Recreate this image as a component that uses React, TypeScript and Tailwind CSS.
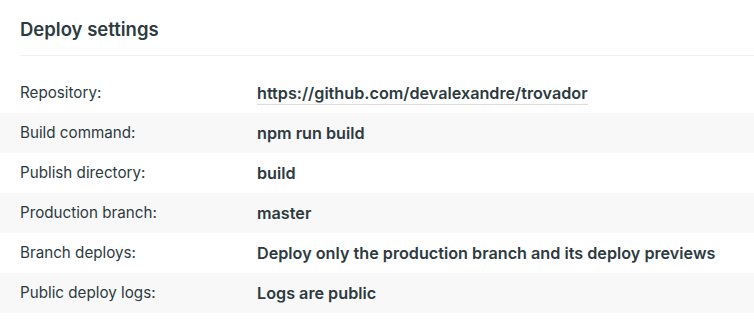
import React from 'react';

type Setting = {
    label: string;
    value: string;
    link?: boolean;
};

const settings: Setting[] = [
    { label: 'Repository:', value: 'https://github.com/devalexandre/trovador', link: true },
    { label: 'Build command:', value: 'npm run build' },
    { label: 'Publish directory:', value: 'build' },
    { label: 'Production branch:', value: 'master' },
    { label: 'Branch deploys:', value: 'Deploy only the production branch and its deploy previews' },
    { label: 'Public deploy logs:', value: 'Logs are public' },
];

const App: React.FC = () => {
    return (
        <div className="w-[754px] h-[323px] bg-white text-[#2d3b41] font-['Inter','Liberation_Sans',sans-serif] overflow-hidden">
            <div className="pl-5 pt-[17px]">
                <h2 className="text-[18.5px] leading-[24px] font-semibold">Deploy settings</h2>
                <div className="mt-[14px] h-px bg-[#f0f0f0]" />
            </div>
            <dl className="mt-[17px]">
                {settings.map((s, i) => (
                    <div
                        key={s.label}
                        className={`flex items-center h-10 px-5 text-[15.2px] ${i % 2 === 1 ? 'bg-[#f8f8f8]' : 'bg-white'}`}
                    >
                        <dt className="w-[237px] shrink-0">{s.label}</dt>
                        <dd className="font-semibold text-[16.2px]">
                            {s.link ? (
                                <a href="#" className="border-b border-[#dcdcdc] pb-[1px]">{s.value}</a>
                            ) : (
                                s.value
                            )}
                        </dd>
                    </div>
                ))}
            </dl>
        </div>
    );
};

export default App;
